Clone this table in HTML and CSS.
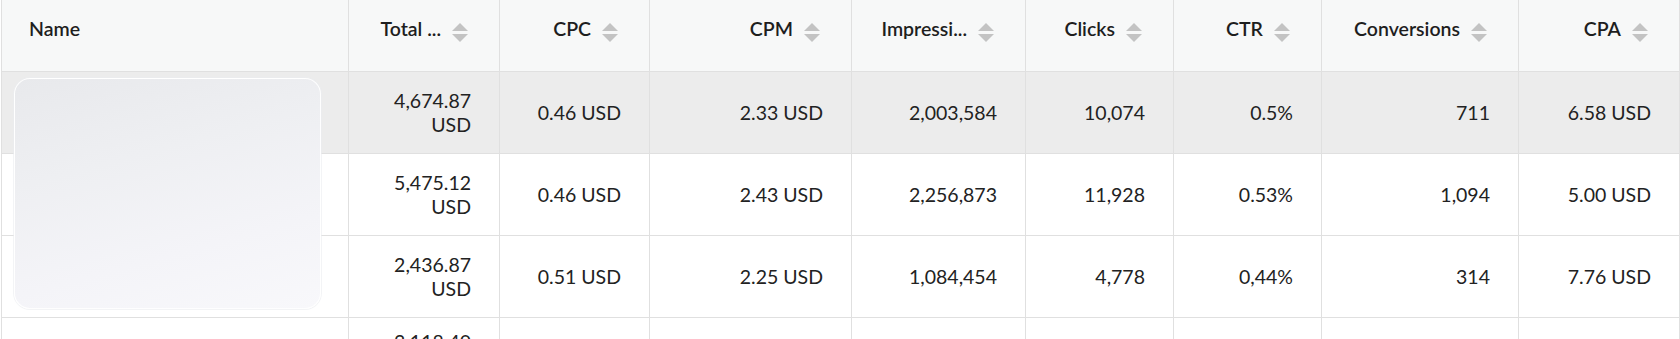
FILE: index.html
```html
<!DOCTYPE html>
<html lang="en">
<head>
<meta charset="utf-8">
<title>Campaign stats</title>
<link rel="stylesheet" href="styles.css">
</head>
<body>
<div class="table">
  <div class="row head">
    <div class="cell name-h">Name</div>
    <div class="cell h"><span>Total ...</span><svg class="sort" viewBox="0 0 16 20"><polygon points="0,8 8,0 16,8"/><polygon points="0,11 16,11 8,19"/></svg></div>
    <div class="cell h"><span>CPC</span><svg class="sort" viewBox="0 0 16 20"><polygon points="0,8 8,0 16,8"/><polygon points="0,11 16,11 8,19"/></svg></div>
    <div class="cell h"><span>CPM</span><svg class="sort" viewBox="0 0 16 20"><polygon points="0,8 8,0 16,8"/><polygon points="0,11 16,11 8,19"/></svg></div>
    <div class="cell h"><span>Impressi...</span><svg class="sort" viewBox="0 0 16 20"><polygon points="0,8 8,0 16,8"/><polygon points="0,11 16,11 8,19"/></svg></div>
    <div class="cell h"><span>Clicks</span><svg class="sort" viewBox="0 0 16 20"><polygon points="0,8 8,0 16,8"/><polygon points="0,11 16,11 8,19"/></svg></div>
    <div class="cell h"><span>CTR</span><svg class="sort" viewBox="0 0 16 20"><polygon points="0,8 8,0 16,8"/><polygon points="0,11 16,11 8,19"/></svg></div>
    <div class="cell h"><span>Conversions</span><svg class="sort" viewBox="0 0 16 20"><polygon points="0,8 8,0 16,8"/><polygon points="0,11 16,11 8,19"/></svg></div>
    <div class="cell h"><span>CPA</span><svg class="sort" viewBox="0 0 16 20"><polygon points="0,8 8,0 16,8"/><polygon points="0,11 16,11 8,19"/></svg></div>
  </div>

  <div class="row hover">
    <div class="cell name"></div>
    <div class="cell d">4,674.87 USD</div>
    <div class="cell d">0.46 USD</div>
    <div class="cell d">2.33 USD</div>
    <div class="cell d">2,003,584</div>
    <div class="cell d">10,074</div>
    <div class="cell d">0.5%</div>
    <div class="cell d">711</div>
    <div class="cell d">6.58 USD</div>
  </div>

  <div class="row">
    <div class="cell name"></div>
    <div class="cell d">5,475.12 USD</div>
    <div class="cell d">0.46 USD</div>
    <div class="cell d">2.43 USD</div>
    <div class="cell d">2,256,873</div>
    <div class="cell d">11,928</div>
    <div class="cell d">0.53%</div>
    <div class="cell d">1,094</div>
    <div class="cell d">5.00 USD</div>
  </div>

  <div class="row">
    <div class="cell name"></div>
    <div class="cell d">2,436.87 USD</div>
    <div class="cell d">0.51 USD</div>
    <div class="cell d">2.25 USD</div>
    <div class="cell d">1,084,454</div>
    <div class="cell d">4,778</div>
    <div class="cell d">0,44%</div>
    <div class="cell d">314</div>
    <div class="cell d">7.76 USD</div>
  </div>

  <div class="row">
    <div class="cell name"></div>
    <div class="cell d d-top">3,118.40 USD</div>
    <div class="cell d"></div>
    <div class="cell d"></div>
    <div class="cell d"></div>
    <div class="cell d"></div>
    <div class="cell d"></div>
    <div class="cell d"></div>
    <div class="cell d"></div>
  </div>

  <div class="mask"></div>
</div>
</body>
</html>
```

FILE: styles.css
```css
* { box-sizing: border-box; }

html, body {
  margin: 0;
  padding: 0;
  background: #ffffff;
  overflow: hidden;
}

body {
  font-family: Lato, "Open Sans", Arial, sans-serif;
  font-size: 19.5px;
  line-height: 24px;
  color: #222222;
}

.table {
  position: relative;
  margin-left: 1px;
  border-left: 1px solid #e0e0e0;
}

.row {
  display: grid;
  grid-template-columns: 347px 151px 150px 202px 174px 148px 148px 197px 1fr;
  height: 82px;
  background: #ffffff;
}

.row.head {
  height: 72px;
  background: #f7f8f8;
}

.row.hover {
  background: #ececec;
}

.cell {
  border-right: 1px solid #e0e0e0;
  border-bottom: 1px solid #e0e0e0;
  min-width: 0;
}

.name-h {
  padding: 17px 0 0 27px;
  font-weight: 600;
  color: #1e1e1e;
}

.h {
  display: flex;
  justify-content: flex-end;
  align-items: flex-start;
  gap: 11px;
  padding: 17px 31px 0 0;
  font-weight: 600;
  color: #1e1e1e;
  white-space: nowrap;
}

.sort {
  width: 16px;
  height: 20px;
  margin-top: 6px;
  flex: none;
  fill: #c3c3c3;
}

.d {
  display: flex;
  align-items: center;
  justify-content: flex-end;
  text-align: right;
  padding: 0 28px 0 24px;
}

.d-top {
  align-items: flex-start;
  padding-top: 12px;
}

.mask {
  position: absolute;
  left: 12px;
  top: 78px;
  width: 307px;
  height: 231px;
  border-radius: 16px;
  border: 1px solid rgba(255, 255, 255, 0.95);
  background: linear-gradient(165deg, #e8e9ec 0%, #eeeff2 35%, #f4f4f8 70%, #f8f8fb 100%);
  box-shadow: 0 0 0 1px rgba(235, 236, 240, 0.6);
}
```
